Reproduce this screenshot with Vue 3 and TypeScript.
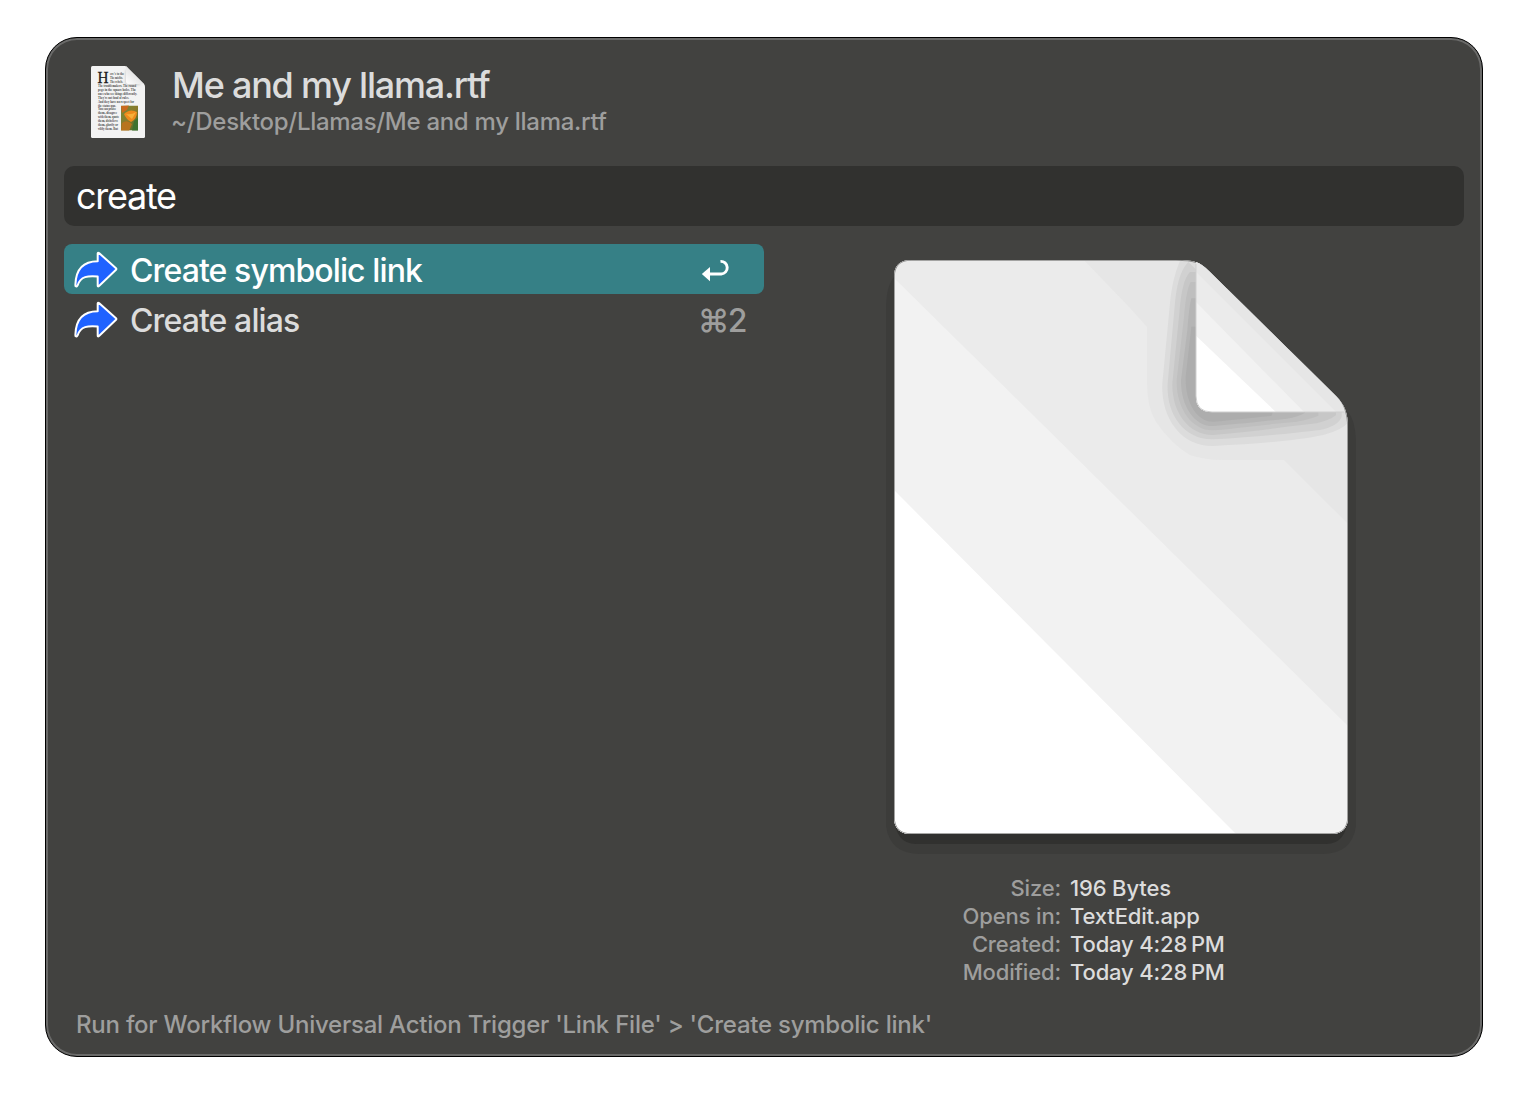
<script setup lang="ts">
interface Action {
  title: string
  shortcut: string | null
}

interface Detail {
  label: string
  value: string
}

const file = {
  name: 'Me and my llama.rtf',
  path: '~/Desktop/Llamas/Me and my llama.rtf',
}

const query = 'create'

const actions: Action[] = [
  { title: 'Create symbolic link', shortcut: null },
  { title: 'Create alias', shortcut: '⌘2' },
]

const details: Detail[] = [
  { label: 'Size:', value: '196 Bytes' },
  { label: 'Opens in:', value: 'TextEdit.app' },
  { label: 'Created:', value: 'Today 4:28\u2009PM' },
  { label: 'Modified:', value: 'Today 4:28\u2009PM' },
]

const hint = "Run for Workflow Universal Action Trigger 'Link File' > 'Create symbolic link'"

// Thumbnail copy: [text, x, width]
const lines: [string, number, number][] = [
  ["ere's to the", 19, 14],
  ['The misfits.', 19, 13],
  ['The rebels.', 19, 13],
  ['The troublemakers. The round', 7, 38],
  ['pegs in the square holes. The', 7, 38],
  ['ones who see things differently.', 7, 39],
  ["They're not fond of rules.", 7, 31],
  ['And they have no respect for', 7, 36],
  ['the status quo.', 7, 18],
  ['You can praise', 7, 18],
  ['them, disagree', 7, 19],
  ['with them, quote', 7, 21],
  ['them, disbelieve', 7, 20],
  ['them, glorify or', 7, 20],
  ['vilify them. But', 7, 20],
]
</script>

<template>
  <main class="stage">
    <section class="window">
      <header class="file">
        <svg class="thumb" viewBox="0 0 54 72" width="54" height="72">
          <defs>
            <clipPath id="photo"><rect x="30" y="39.5" width="17" height="25" /></clipPath>
            <linearGradient id="leaf" x1="0" y1="0" x2="1" y2="1">
              <stop offset="0" stop-color="#6f8b3c" />
              <stop offset=".5" stop-color="#8a7a2c" />
              <stop offset="1" stop-color="#3f6a2e" />
            </linearGradient>
            <linearGradient id="curl" x1="0" y1="1" x2=".55" y2=".4">
              <stop offset="0" stop-color="#fff" />
              <stop offset="1" stop-color="#e2e2e2" />
            </linearGradient>
            <filter id="soft" x="-50%" y="-50%" width="200%" height="200%">
              <feGaussianBlur stdDeviation="1.4" />
            </filter>
          </defs>
          <path d="M1.5 0H33.5Q35 0 36.2 1.2L53 18Q54 19 54 20.500V70.500Q54 72 52.500 72H1.500Q0 72 0 70.500V1.500Q0 0 1.500 0Z" fill="#f3f3f3" />
          <text class="cap" x="6.500" y="17.300" textLength="11" lengthAdjust="spacingAndGlyphs">H</text>
          <text
            v-for="(line, i) in lines"
            :key="i"
            class="copy"
            :x="line[1]"
            :y="9.2 + i * 3.92"
            :textLength="line[2]"
            lengthAdjust="spacingAndGlyphs"
          >{{ line[0] }}</text>
          <g clip-path="url(#photo)">
            <rect x="30" y="39.500" width="17" height="25" fill="url(#leaf)" />
            <path d="M30 40L38 39 36 44 31 47Z" fill="#c96a1e" />
            <path d="M33 48Q39 42 46 46Q46 53 40 56Q35 53 33 48Z" fill="#ee8a1d" />
            <path d="M35 48Q41 49 45 46L41 53Z" fill="#f7b03a" />
            <path d="M31 57Q36 53 41 58L38 65H30Z" fill="#b8741f" />
            <path d="M43 55L47 52V65H41Z" fill="#3e7231" />
          </g>
          <path d="M35 3V18.500H50Z" fill="#999" opacity=".6" filter="url(#soft)" />
          <path d="M35 0Q35.500 .4 36.200 1.200L53 18H37Q35 18 35 16Z" fill="url(#curl)" />
        </svg>
        <div class="names">
          <h1>{{ file.name }}</h1>
          <p>{{ file.path }}</p>
        </div>
      </header>

      <div class="query">{{ query }}</div>

      <div class="body">
        <ul class="actions">
          <li v-for="(action, i) in actions" :key="action.title" :class="{ selected: i === 0 }">
            <svg class="arrow" viewBox="0 0 44 38" width="44" height="38">
              <path
                d="M23.700 2.300Q24 1.300 25 2L42 17.200Q42.700 18 42 18.800L25 35Q23.700 36 23.700 34.400V25.400C14 24.500 6.500 25.200 3.700 34.200Q2.900 36.200 1.700 35.300Q1.300 34.800 1.400 33.500C2 17.500 10 10.300 23.700 10.300Z"
              />
            </svg>
            <span class="label">{{ action.title }}</span>
            <span v-if="action.shortcut" class="shortcut">{{ action.shortcut }}</span>
            <svg v-else class="return" viewBox="0 0 46 24" width="46" height="24">
              <path d="M.8 15L9 8V22.200Z" fill="#fff" />
              <path d="M8 15H20.300A6.200 6.200 0 0 0 19.500 2.400" fill="none" stroke="#fff" stroke-width="2.900" />
            </svg>
          </li>
        </ul>

        <aside class="preview">
          <svg class="page" viewBox="884 250 474 610" width="474" height="610">
            <defs>
              <clipPath id="sheet">
                <path d="M911 260H1176C1194 260 1200 262 1209 271L1336 396C1344 404 1348 412 1348 428V817Q1348 834 1331 834H911Q894 834 894 817V277Q894 260 911 260Z" />
              </clipPath>
              <clipPath id="fold">
                <path d="M1196 262Q1202 264 1209 271L1336 396Q1343 403 1345 412H1212Q1196 412 1196 396Z" />
              </clipPath>
            </defs>
            <path d="M894 277Q886 286 886 310V826Q890 854 920 854H1322Q1352 854 1356 826V440Q1355 420 1348 412Z" fill="#3c3c3a" />
            <path d="M894 815Q895 844 916 844H1326Q1347 844 1348 815Z" fill="#31312f" />
            <g clip-path="url(#sheet)">
              <rect x="890" y="256" width="462" height="582" fill="#e6e6e6" />
              <path d="M890 256H1080L1130 308 1147 327 1147 383Q1147 407 1156 422Q1172 445 1190 455Q1205 460 1223 460H1284L1352 528V840H890Z" fill="#ebebeb" />
              <path d="M890 274L1352 730V840H890Z" fill="#f2f2f2" />
              <path d="M890 486L1240 838H890Z" fill="#fff" />
              <g transform="translate(1130 250) scale(.33333)">
                <path d="M150 32Q124 90 118 180L97 400C92 500 150 590 250 588C380 582 500 572 580 555Q640 540 656 515V480L200 30Z" fill="#dcdcdc" />
                <path d="M175 36Q140 70 133 180L113 400C108 490 160 570 250 568C380 562 500 548 570 540Q625 528 635 500V480L200 60Z" fill="#d1d1d1" />
                <path d="M198 66H180Q155 90 148 190L127 400C125 485 175 556 250 555C380 545 480 528 560 520Q600 510 618 496V480H198Z" fill="#c7c7c7" />
                <path d="M198 96H182Q168 120 161 210L140 390C138 475 185 542 250 541C350 532 420 522 500 515Q540 508 565 497V480H198Z" fill="#bfbfbf" />
                <path d="M198 145H184Q177 170 172 240L153 390C152 470 195 530 250 528C340 521 400 514 470 506Q505 500 525 488V480H198Z" fill="#b5b5b5" />
                <path d="M198 230H184L167 380C165 460 202 516 250 515C330 508 380 502 425 497L430 480H240L198 440Z" fill="#adadad" />
              </g>
              <path d="M911 260H1176C1194 260 1200 262 1209 271L1336 396C1344 404 1348 412 1348 428V817Q1348 834 1331 834H911Q894 834 894 817V277Q894 260 911 260Z" fill="none" stroke="#8c8c8b" stroke-width="1.600" />
            </g>
            <path d="M1196 262Q1202 264 1209 271L1336 396Q1343 403 1345 412H1212Q1196 412 1196 396Z" fill="#adadad" />
            <g clip-path="url(#fold)">
              <rect x="1190" y="256" width="160" height="160" fill="#e6e6e6" />
              <path d="M1190 266L1340 416H1190Z" fill="#ebebeb" />
              <path d="M1190 296L1308 416H1190Z" fill="#f2f2f2" />
              <path d="M1190 330L1280 416H1190Z" fill="#fff" />
            </g>
            <path d="M1196 264V396Q1196 412 1212 412H1344" fill="none" stroke="#cfcfcf" stroke-width="1" />
          </svg>

          <dl class="details">
            <template v-for="d in details" :key="d.label">
              <dt>{{ d.label }}</dt>
              <dd>{{ d.value }}</dd>
            </template>
          </dl>
        </aside>
      </div>

      <footer class="hint">{{ hint }}</footer>
    </section>
  </main>
</template>

<style>
body {
  background: #fff;
}
</style>

<style scoped>
.stage {
  box-sizing: border-box;
  width: 1528px;
  height: 1110px;
  padding: 37px 45px 53px;
  font-family: Inter, 'Liberation Sans', sans-serif;
  font-weight: 450;
}

.window {
  box-sizing: border-box;
  display: flex;
  flex-direction: column;
  width: 1438px;
  height: 1020px;
  padding: 15px 18px 0;
  border: 1px solid #000;
  border-radius: 32px;
  background: #424240;
  box-shadow: inset 0 0 0 2px #6a6a69;
}

.file {
  display: flex;
  height: 113px;
  padding: 13px 0 0 27px;
  box-sizing: border-box;
}

.thumb {
  flex: none;
}

.cap {
  font: 400 16px 'Liberation Serif', serif;
  fill: #1c1c1c;
  stroke: #1c1c1c;
  stroke-width: 0.3;
}

.copy {
  font: 700 3.4px 'Liberation Serif', serif;
  fill: #4a4a4a;
}

.names {
  margin: -1px 0 0 27px;
}

.names h1 {
  margin: 0;
  font-size: 36px;
  font-weight: 450;
  font-feature-settings: 'calt' 0, 'liga' 0;
  line-height: 40px;
  letter-spacing: -1.22px;
  color: #dcdcdc;
}

.names p {
  margin: 1px 0 0 -1px;
  font-size: 24px;
  line-height: 32px;
  letter-spacing: -0.29px;
  color: #9e9e9d;
}

.query {
  box-sizing: border-box;
  flex: none;
  height: 60px;
  padding: 0 12px;
  border-radius: 10px;
  background: #31312f;
  color: #fff;
  font-size: 36px;
  font-weight: 400;
  line-height: 61px;
  letter-spacing: -1.3px;
}

.body {
  display: flex;
  flex: none;
  height: 782px;
  padding-top: 18px;
  box-sizing: border-box;
}

.actions {
  width: 700px;
  margin: 0;
  padding: 0;
  list-style: none;
}

.actions li {
  display: flex;
  align-items: center;
  height: 50px;
  padding: 2px 17px 0 10px;
  box-sizing: border-box;
  border-radius: 8px;
  color: #dcdcdc;
  font-size: 32px;
}

.actions li.selected {
  background: #368086;
  color: #fff;
}

.arrow {
  flex: none;
  margin-top: 0;
}

.arrow path {
  fill: #1f62ff;
  stroke: #fff;
  stroke-width: 2;
  stroke-linejoin: round;
}

.label {
  flex: 1;
  margin-left: 12px;
  letter-spacing: -0.9px;
}

.shortcut {
  margin-right: 1px;
  letter-spacing: -1.6px;
  color: #9e9e9d;
}

.return {
  flex: none;
  margin-top: 1px;
}

.preview {
  display: flex;
  flex: 1;
  flex-direction: column;
  align-items: center;
  padding: 6px 0 0 14px;
}

.page {
  flex: none;
}

.details {
  display: grid;
  grid-template-columns: 178px 178px;
  column-gap: 9px;
  align-self: flex-start;
  margin: 14px 0 0 105px;
  font-size: 22px;
  line-height: 28px;
  letter-spacing: -0.15px;
}

.details dt {
  text-align: right;
  color: #9e9e9d;
}

.details dd {
  margin: 0;
  color: #dcdcdc;
  white-space: nowrap;
}

.hint {
  padding: 0 12px;
  font-size: 24px;
  line-height: 34px;
  letter-spacing: -0.235px;
  color: #9e9e9d;
  white-space: nowrap;
}
</style>
